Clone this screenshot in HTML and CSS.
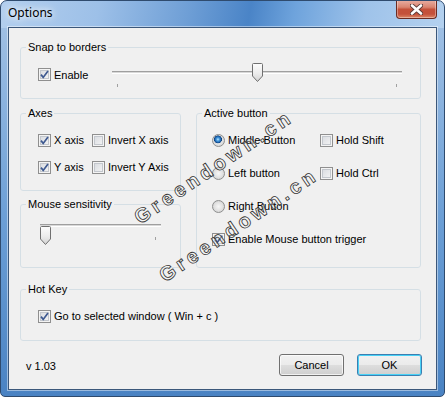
FILE: index.html
```html
<!DOCTYPE html>
<html lang="en">
<head>
    <meta charset="UTF-8">
    <title>Options</title>
    <link rel="stylesheet" href="styles.css">
</head>
<body>
    <div class="window">
        <div class="titlebar">
            <span class="title">Options</span>
            <button class="close" type="button">
                <svg width="13" height="11" viewBox="0 0 13 11">
                    <path d="M2 1.5l9 8M11 1.5l-9 8" stroke="#5b3a36" stroke-width="4.4" stroke-linecap="round"/>
                    <path d="M2 1.5l9 8M11 1.5l-9 8" stroke="#fff" stroke-width="2.6" stroke-linecap="round"/>
                </svg>
            </button>
        </div>

        <div class="client">
            <fieldset class="group snap">
                <legend>Snap to borders</legend>
                <div class="snap-row">
                    <label class="opt snap-opt">
                        <span class="box"><svg viewBox="0 0 11 11"><path d="M2 5.6 4.2 8.4 9 1.9"/></svg></span>Enable
                    </label>
                    <div class="slider snap-slider">
                        <div class="track"></div>
                        <div class="ticks"><span></span><span></span></div>
                        <div class="thumb" style="--v: 0.5">
                            <svg width="11" height="19" viewBox="0 0 11 19">
                                <defs>
                                    <linearGradient id="tg1" x1="0" y1="0" x2="0" y2="1">
                                        <stop offset="0" stop-color="#fdfdfd"/>
                                        <stop offset=".55" stop-color="#ececec"/>
                                        <stop offset="1" stop-color="#d2d2d2"/>
                                    </linearGradient>
                                </defs>
                                <path d="M1.5.5h8a1 1 0 0 1 1 1V13L5.5 18.5.5 13V1.5a1 1 0 0 1 1-1z" fill="url(#tg1)" stroke="#707070"/>
                            </svg>
                        </div>
                    </div>
                </div>
            </fieldset>

            <div class="middle">
                <div class="col">
                    <fieldset class="group axes">
                        <legend>Axes</legend>
                        <div class="axes-grid">
                            <label class="opt"><span class="box"><svg viewBox="0 0 11 11"><path d="M2 5.6 4.2 8.4 9 1.9"/></svg></span>X axis</label>
                            <label class="opt"><span class="box"></span>Invert X axis</label>
                            <label class="opt"><span class="box"><svg viewBox="0 0 11 11"><path d="M2 5.6 4.2 8.4 9 1.9"/></svg></span>Y axis</label>
                            <label class="opt"><span class="box"></span>Invert Y Axis</label>
                        </div>
                    </fieldset>

                    <fieldset class="group sens">
                        <legend>Mouse sensitivity</legend>
                        <div class="slider sens-slider">
                            <div class="track"></div>
                            <div class="ticks"><span></span><span></span></div>
                            <div class="thumb" style="--v: 0">
                                <svg width="11" height="19" viewBox="0 0 11 19">
                                    <defs>
                                        <linearGradient id="tg2" x1="0" y1="0" x2="0" y2="1">
                                            <stop offset="0" stop-color="#fdfdfd"/>
                                            <stop offset=".55" stop-color="#ececec"/>
                                            <stop offset="1" stop-color="#d2d2d2"/>
                                        </linearGradient>
                                    </defs>
                                    <path d="M1.5.5h8a1 1 0 0 1 1 1V13L5.5 18.5.5 13V1.5a1 1 0 0 1 1-1z" fill="url(#tg2)" stroke="#707070"/>
                                </svg>
                            </div>
                        </div>
                    </fieldset>
                </div>

                <fieldset class="group active">
                    <legend>Active button</legend>
                    <div class="active-grid">
                        <label class="opt"><span class="radio on"></span>Middle Button</label>
                        <label class="opt"><span class="box"></span>Hold Shift</label>
                        <label class="opt"><span class="radio"></span>Left button</label>
                        <label class="opt"><span class="box"></span>Hold Ctrl</label>
                        <label class="opt"><span class="radio"></span>Right Button</label>
                        <span></span>
                        <label class="opt wide"><span class="box"><svg viewBox="0 0 11 11"><path d="M2 5.6 4.2 8.4 9 1.9"/></svg></span>Enable Mouse button trigger</label>
                    </div>
                </fieldset>
            </div>

            <fieldset class="group hotkey">
                <legend>Hot Key</legend>
                <div class="hotkey-row">
                    <label class="opt"><span class="box"><svg viewBox="0 0 11 11"><path d="M2 5.6 4.2 8.4 9 1.9"/></svg></span>Go to selected window ( Win + c )</label>
                </div>
            </fieldset>

            <div class="footer">
                <span class="version">v 1.03</span>
                <button class="btn" type="button">Cancel</button>
                <button class="btn default" type="button">OK</button>
            </div>
        </div>

        <!-- watermark over the screenshot -->
        <span class="watermark wm1">Greendown.cn</span>
        <span class="watermark wm2">Greendown.cn</span>
    </div>
</body>
</html>
```

FILE: styles.css
```css
* {
    box-sizing: border-box;
}
body {
    margin: 0;
    font-family: "Liberation Sans", Arial, sans-serif;
    font-size: 11px;
    color: #000;
    background: #fff;
}
.window {
    position: relative;
    width: 445px;
    height: 397px;
    border: 1px solid #2f4b6e;
    border-radius: 7px 7px 5px 5px;
    overflow: hidden;
    background:
        linear-gradient(100deg, #b3cfee 0%, #9dc0e8 22%, #6f9fd6 42%, #4a84c7 56%, #6ea3dc 66%, #9fc3ea 82%, #b4d1ef 100%) top / 100% 27px no-repeat,
        linear-gradient(#a6c4e6, #6c9fd6 55%, #4a83c3);
}
.titlebar {
    height: 26px;
    display: flex;
    justify-content: space-between;
    align-items: flex-start;
    padding-left: 7px;
}
.title {
    margin-top: 4px;
    font-family: "Noto Sans", sans-serif;
    font-size: 12px;
    line-height: 16px;
    color: #000;
    text-shadow: 0 0 6px #fff, 0 0 10px rgba(255, 255, 255, 0.9);
}
.close {
    width: 41px;
    height: 19px;
    margin: -1px 7px 0 0;
    padding: 0;
    display: flex;
    align-items: center;
    justify-content: center;
    border: 1px solid #6b2b22;
    border-top: none;
    border-radius: 0 0 4px 4px;
    background: linear-gradient(#e9b0a4 0%, #d98470 40%, #c4513a 52%, #c4513b 78%, #dd8867 100%);
    box-shadow: inset 0 0 0 1px rgba(255, 255, 255, 0.35);
}
.close svg {
    display: block;
}
.client {
    height: 363px;
    margin: 0 7px;
    padding: 13px 15px 0 11px;
    border: 1px solid #3b577a;
    background: #f0f0f0;
    box-shadow: 0 0 0 1px rgba(255, 255, 255, 0.45);
}
.group {
    margin: 0;
    padding: 0;
    min-width: 0;
    border: 1px solid #d5dfe5;
    border-radius: 3px;
}
.group legend {
    margin-left: 5px;
    padding: 0 2px;
    line-height: 13px;
}
.opt {
    display: flex;
    align-items: center;
    gap: 3px;
    height: 20px;
    white-space: nowrap;
}
.box {
    flex: none;
    width: 13px;
    height: 13px;
    border: 1px solid #8f8f8f;
    background: linear-gradient(135deg, #d5d8dd, #f7f7f7);
    box-shadow: inset 0 0 0 1px #f4f4f4, inset 0 0 0 2px #c3c7cd;
}
.box svg {
    display: block;
    width: 11px;
    height: 11px;
    fill: none;
    stroke: #3f5a91;
    stroke-width: 1.7;
}
.radio {
    flex: none;
    width: 13px;
    height: 13px;
    border: 1px solid #8e8f8f;
    border-radius: 50%;
    background: radial-gradient(circle at 50% 50%, #f6f6f6 0, #e2e2e2 4px, #d3d3d3 6px);
}
.radio.on {
    background:
        radial-gradient(circle at 45% 40%, #c4e6fb 0, #4a9ee0 1.5px, #1c63ad 3px, #0e3e78 3.7px, transparent 4.2px),
        radial-gradient(circle at 50% 50%, #f6f6f6 0, #e2e2e2 4px, #d3d3d3 6px);
}

/* snap */
.snap {
    height: 58px;
}
.snap-row {
    display: flex;
    align-items: center;
    height: 27px;
    margin-top: 7px;
    padding-left: 17px;
}
.snap-opt {
    width: 74px;
}
.snap-slider {
    width: 290px;
}

/* trackbar */
.slider {
    position: relative;
    height: 27px;
}
.track {
    margin-top: 10px;
    height: 3px;
    border-top: 1px solid #9f9f9f;
    border-bottom: 1px solid #fff;
    background: #d8d8d8;
}
.ticks {
    display: flex;
    justify-content: space-between;
    margin-top: 10px;
    padding: 0 5px;
}
.ticks span {
    width: 1px;
    height: 3px;
    background: #a0a0a0;
}
.thumb {
    position: absolute;
    top: 2px;
    left: calc(5px + (100% - 11px) * var(--v) - 5px);
    width: 11px;
    height: 19px;
}
.thumb svg {
    display: block;
}

.middle {
    display: grid;
    grid-template-columns: 161px 225px;
    column-gap: 15px;
    margin-top: 8px;
}
.col {
    display: flex;
    flex-direction: column;
    gap: 7px;
}
.axes {
    height: 84px;
}
.axes-grid {
    display: grid;
    grid-template-columns: 54px auto;
    row-gap: 7px;
    margin-top: 10px;
    padding-left: 17px;
}
.sens {
    height: 70px;
}
.sens-slider {
    width: 121px;
    margin: 13px 0 0 19px;
}
.active {
    height: 161px;
}
.active-grid {
    display: grid;
    grid-template-columns: 108px auto;
    row-gap: 13px;
    margin-top: 10px;
    padding-left: 15px;
}
.active-grid .wide {
    grid-column: 1 / -1;
}
.hotkey {
    height: 58px;
    margin-top: 15px;
}
.hotkey-row {
    margin-top: 10px;
    padding-left: 17px;
}

.footer {
    display: flex;
    align-items: center;
    gap: 13px;
    margin: 13px -1px 0 0;
}
.version {
    margin: 2px auto 0 6px;
}
.btn {
    width: 65px;
    height: 22px;
    padding: 0;
    font: inherit;
    color: #000;
    border: 1px solid #707070;
    border-radius: 3px;
    background: linear-gradient(#f2f2f2 0%, #ebebeb 48%, #dddddd 52%, #cfcfcf 100%);
    box-shadow: inset 0 0 0 1px rgba(255, 255, 255, 0.7);
}
.btn.default {
    border-color: #3c7fb1;
    box-shadow: inset 0 0 0 1px #48d1f6;
}

.watermark {
    position: absolute;
    font-family: "Liberation Sans", Arial, sans-serif;
    font-weight: bold;
    font-size: 20px;
    line-height: 20px;
    letter-spacing: 4px;
    white-space: nowrap;
    color: rgba(255, 255, 255, 0.4);
    -webkit-text-stroke: 0.8px #333;
    transform: rotate(-34deg);
    transform-origin: 0 50%;
    pointer-events: none;
}
.wm1 {
    left: 135px;
    top: 208px;
}
.wm2 {
    left: 160px;
    top: 266px;
}
```
